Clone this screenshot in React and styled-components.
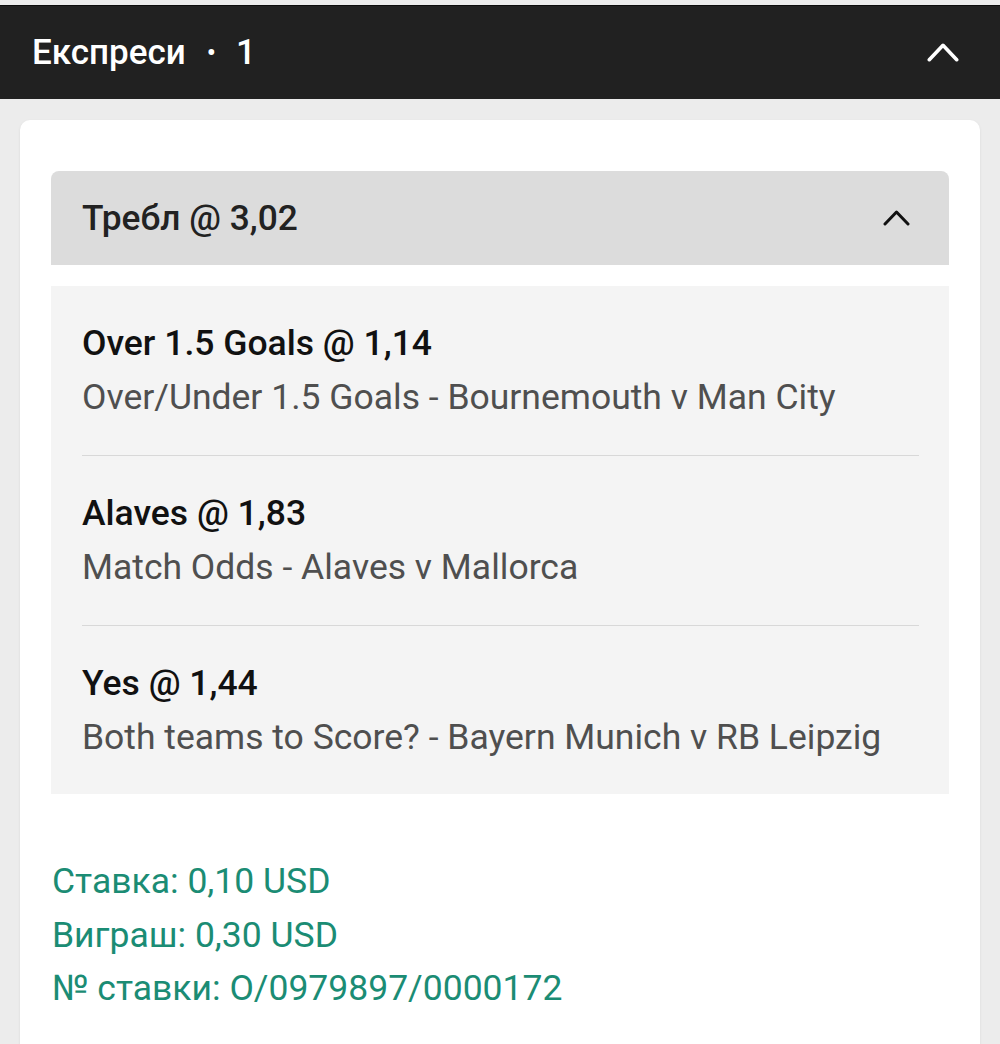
import styled, { createGlobalStyle } from "styled-components"

const Global = createGlobalStyle`
  body {
    margin: 0;
    background: #ececec;
    font-family: Roboto, "Noto Sans", sans-serif;
  }
`

const legs = [
    { title: "Over 1.5 Goals @ 1,14", market: "Over/Under 1.5 Goals - Bournemouth v Man City" },
    { title: "Alaves @ 1,83", market: "Match Odds - Alaves v Mallorca" },
    { title: "Yes @ 1,44", market: "Both teams to Score? - Bayern Munich v RB Leipzig" },
]

// chevron pointing up, w/h in px
function Chevron({ color, w, h, stroke }) {
    const s = stroke / 2 + 0.5
    return (
        <svg width={w} height={h} viewBox={`0 0 ${w} ${h}`} fill="none">
            <path
                d={`M${s} ${h - s} L${w / 2} ${s} L${w - s} ${h - s}`}
                stroke={color}
                strokeWidth={stroke}
                strokeLinecap="round"
                strokeLinejoin="round"
            />
        </svg>
    )
}

export default function App() {
    return (
        <>
            <Global />
            <Page>
                <TopBar>
                    <TopTitle>Експреси<Dot>•</Dot>1</TopTitle>
                    <Chevron color="#fff" w={32} h={19} stroke={3.6} />
                </TopBar>
                <Card>
                    <BetHeader>
                        <BetTitle>Требл @ 3,02</BetTitle>
                        <Chevron color="#111" w={27} h={16} stroke={3} />
                    </BetHeader>
                    <Legs>
                        {legs.map((leg) => (
                            <Leg key={leg.title}>
                                <LegTitle>{leg.title}</LegTitle>
                                <LegMarket>{leg.market}</LegMarket>
                            </Leg>
                        ))}
                    </Legs>
                    <Summary>
                        <SummaryLine>Ставка: 0,10 USD</SummaryLine>
                        <SummaryLine>Виграш: 0,30 USD</SummaryLine>
                        <SummaryLine>№ ставки: O/0979897/0000172</SummaryLine>
                    </Summary>
                </Card>
            </Page>
        </>
    )
}

const Page = styled.div`
  padding-top: 5px;
  min-height: 1044px;
  box-sizing: border-box;
`

const TopBar = styled.div`
  height: 94px;
  box-sizing: border-box;
  border-top: 1px solid #0c0c0c;
  background: #212121;
  display: flex;
  align-items: center;
  justify-content: space-between;
  padding: 0 41px 0 32px;
`

const TopTitle = styled.div`
  color: #fff;
  font-size: 35px;
  font-weight: 500;
  display: flex;
  align-items: center;
`

const Dot = styled.span`
  margin: 0 20px 0 21px;
  font-size: 26px;
`

const Card = styled.div`
  margin: 21px 20px 0;
  background: #fff;
  border-radius: 10px;
  box-shadow: 0 1px 3px rgba(0, 0, 0, 0.08);
  padding: 51px 31px 40px;
`

const BetHeader = styled.div`
  height: 94px;
  background: #dcdcdc;
  border-radius: 8px 8px 0 0;
  display: flex;
  align-items: center;
  justify-content: space-between;
  padding: 0 39px 0 31px;
`

const BetTitle = styled.div`
  font-size: 35.3px;
  font-weight: 500;
  color: #222;
`

const Legs = styled.div`
  margin-top: 21px;
  background: #f4f4f4;
  padding: 0 30px 0 31px;
`

const Leg = styled.div`
  padding: 37px 0 38px;
  border-bottom: 1px solid #d8d8d8;

  &:last-child {
    border-bottom: none;
    padding-bottom: 37px;
  }
`

const LegTitle = styled.div`
  font-size: 35.5px;
  font-weight: 500;
  color: #111;
  line-height: 40px;
`

const LegMarket = styled.div`
  margin-top: 14px;
  font-size: 35.5px;
  color: #4f4f4f;
  line-height: 40px;
`

const Summary = styled.div`
  margin-top: 61px;
  padding-left: 1px;
`

const SummaryLine = styled.div`
  font-size: 35.5px;
  line-height: 53.5px;
  color: #1b8c74;
`
